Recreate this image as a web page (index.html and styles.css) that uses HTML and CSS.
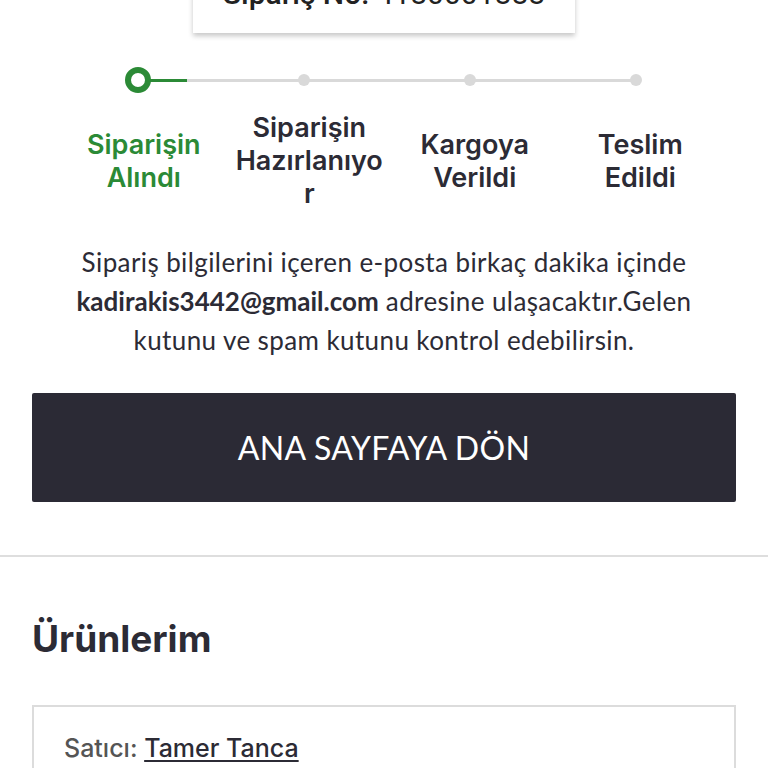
FILE: index.html
```html
<!DOCTYPE html>
<html lang="tr">
<head>
    <meta charset="UTF-8">
    <meta name="viewport" content="width=device-width, initial-scale=1.0">
    <title>Sipariş Alındı</title>
    <link rel="stylesheet" href="styles.css">
</head>
<body>
    <div class="order-no">
        <span class="order-no-label">Sipariş No:</span> 4180001888
    </div>

    <div class="stepper">
        <div class="step-track">
            <div class="step-dot step-dot--active"></div>
            <div class="step-dot"></div>
            <div class="step-dot"></div>
            <div class="step-dot"></div>
        </div>
        <div class="step-labels">
            <div class="step-label step-label--active">Siparişin Alındı</div>
            <div class="step-label">Siparişin Hazırlanıyor</div>
            <div class="step-label">Kargoya Verildi</div>
            <div class="step-label">Teslim Edildi</div>
        </div>
    </div>

    <p class="info-text">
        Sipariş bilgilerini içeren e-posta birkaç dakika içinde
        <b>kadirakis3442@gmail.com</b> adresine ulaşacaktır.Gelen
        kutunu ve spam kutunu kontrol edebilirsin.
    </p>

    <div class="actions">
        <a class="home-btn" href="#">ANA SAYFAYA DÖN</a>
    </div>

    <hr class="divider">

    <section class="products">
        <h2 class="products-title">Ürünlerim</h2>
        <div class="seller-card">
            <div class="seller">Satıcı: <a href="#">Tamer Tanca</a></div>
        </div>
    </section>
</body>
</html>
```

FILE: styles.css
```css
body {
	margin: 0;
	background: #fff;
	color: #2c2b35;
	font-family: Lato, "Noto Sans", sans-serif;
}

/* order number card, scrolled mostly off the top */
.order-no {
	width: 334px;
	margin: -41px auto 0;
	padding: 20px 24px 24px;
	background: #fff;
	box-shadow: 0 3px 5px rgba(0, 0, 0, 0.22);
	font-family: Roboto, sans-serif;
	font-size: 30px;
	line-height: 30px;
	color: #222;
	text-align: center;
	white-space: nowrap;
}

.order-no-label {
	font-weight: 500;
}

/* stepper */
.stepper {
	margin: 34px 49px 0 55px;
}

.step-track {
	position: relative;
	display: grid;
	grid-template-columns: repeat(4, 1fr);
	align-items: center;
	height: 26px;
}

.step-track::before {
	content: "";
	position: absolute;
	left: 12.5%;
	right: 12.5%;
	top: 12px;
	height: 3px;
	background: #d9d9d9;
}

.step-track::after {
	content: "";
	position: absolute;
	left: 12.5%;
	width: 49px;
	top: 12px;
	height: 3px;
	background: #2b8a36;
}

.step-dot {
	position: relative;
	z-index: 1;
	justify-self: center;
	width: 12px;
	height: 12px;
	border-radius: 50%;
	background: #d9d9d9;
}

.step-dot--active {
	width: 14px;
	height: 14px;
	border: 6px solid #2b8a36;
	background: #fff;
}

.step-labels {
	display: grid;
	grid-template-columns: repeat(4, 1fr);
	align-items: center;
	margin: 18px -4px 0 6px;
	min-height: 99px;
}

.step-label {
	padding: 0 7px;
	text-align: center;
	font-family: Inter, sans-serif;
	font-weight: 600;
	font-size: 27px;
	line-height: 33px;
	color: #2c2b35;
	overflow-wrap: anywhere;
}

.step-label--active {
	color: #2b8a36;
}

/* info */
.info-text {
	margin: 33px 32px 0;
	text-align: center;
	font-size: 26px;
	letter-spacing: 0.4px;
	line-height: 39px;
	color: #2c2b35;
}

.info-text b {
	font-weight: 700;
	letter-spacing: 0;
}

.actions {
	margin: 33px 32px 0;
}

.home-btn {
	display: flex;
	align-items: center;
	justify-content: center;
	height: 109px;
	background: #2b2a35;
	border-radius: 2px;
	color: #fff;
	text-decoration: none;
	font-size: 32px;
	letter-spacing: 0.3px;
}

.divider {
	margin: 53px 0 0;
	border: 0;
	height: 2px;
	background: #dedede;
}

/* products */
.products {
	padding: 0 32px;
}

.products-title {
	margin: 58px 0 0;
	font-family: Inter, sans-serif;
	font-weight: 700;
	font-size: 37px;
	line-height: 48px;
	color: #2c2b35;
}

.seller-card {
	margin-top: 42px;
	border: 2px solid #dcdcdc;
	padding: 26px 30px 60px;
}

.seller {
	font-family: Inter, sans-serif;
	font-weight: 500;
	font-size: 25px;
	color: #555;
}

.seller a {
	color: #2c2b35;
	text-decoration: underline;
	text-underline-offset: 3px;
}
```
